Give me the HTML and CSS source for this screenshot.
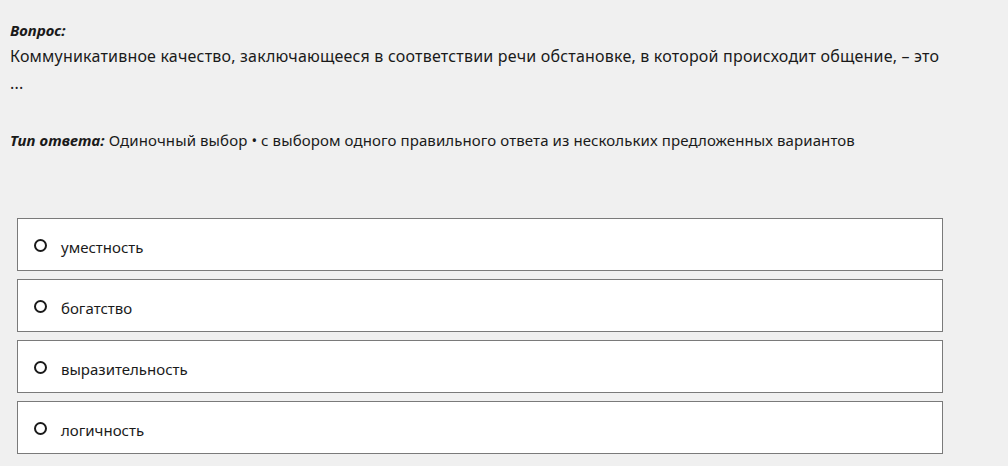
FILE: index.html
```
<!DOCTYPE html>
<html lang="ru">
<head>
  <meta charset="UTF-8">
  <title>Вопрос</title>
  <link rel="stylesheet" href="styles.css">
</head>
<body>
  <div class="question">
    <div class="label">Вопрос:</div>
    <p class="text">Коммуникативное качество, заключающееся в соответствии речи обстановке, в которой происходит общение, – это<br>...</p>
  </div>

  <p class="answer-type"><span class="label">Тип ответа:</span> Одиночный выбор • с выбором одного правильного ответа из нескольких предложенных вариантов</p>

  <div class="options">
    <label class="option"><span class="radio"></span>уместность</label>
    <label class="option"><span class="radio"></span>богатство</label>
    <label class="option"><span class="radio"></span>выразительность</label>
    <label class="option"><span class="radio"></span>логичность</label>
  </div>
</body>
</html>
```

FILE: styles.css
```
body { margin: 0; padding: 17px 10px 0; background: #f0f0f0; color: #1a1a1a; font-family: "Noto Sans", "Open Sans", sans-serif; font-size: 15px; }
.label { font-weight: bold; font-style: italic; }
.question .label { line-height: 26px; }
.text { margin: 0; line-height: 27px; font-size: 16px; letter-spacing: 0.2px; }
.answer-type { margin: 31px 0 0; line-height: 24px; letter-spacing: 0.1px; }
.options { display: flex; flex-direction: column; gap: 8px; margin: 66px 0 0 7px; width: 926px; }
.option {
  display: flex;
  align-items: center;
  box-sizing: border-box;
  height: 53px;
  padding-left: 16px;
  padding-top: 4px;
  background: #fff;
  border: 1px solid #7a7a7a;
}
.radio {
  width: 9px;
  height: 9px;
  border: 2px solid #1a1a1a;
  border-radius: 50%;
  margin-right: 14px;
  margin-top: -2px;
}
```
